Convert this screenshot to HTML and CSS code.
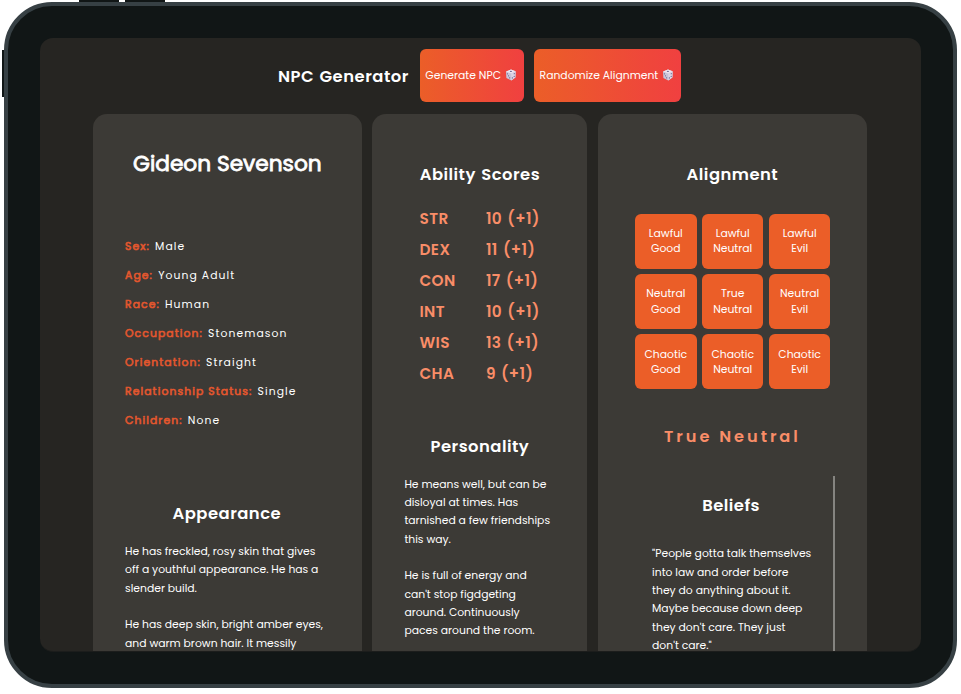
FILE: index.html
```html
<!DOCTYPE html>
<html lang="en">
<head>
<meta charset="utf-8">
<title>NPC Generator</title>
<link rel="stylesheet" href="styles.css">
</head>
<body>
<svg width="0" height="0" class="defs">
  <symbol id="die" viewBox="0 0 12 12">
    <path d="M6 .5 10.6 2.3 10.4 8.6 6.3 11.5 1.4 8.9 1 2.5Z" fill="#c9c4d7"/>
    <path d="M6 .5 10.6 2.3 6.2 4.5 1 2.5Z" fill="#efe6ef"/>
    <path d="M6.2 4.5 10.6 2.3 10.4 8.6 6.3 11.5Z" fill="#dcd3e3"/>
    <ellipse cx="5.9" cy="2.4" rx="1.1" ry=".6" fill="#75739c"/>
    <g fill="#65658f"><circle cx="2.4" cy="4.8" r=".65"/><circle cx="4.6" cy="8.8" r=".65"/><circle cx="3.5" cy="6.8" r=".6"/><circle cx="9.3" cy="4.7" r=".6"/><circle cx="7.4" cy="8.9" r=".65"/><circle cx="9.2" cy="7.4" r=".55"/></g>
  </symbol>
</svg>
<div class="tablet">
  <i class="key key-left"></i><i class="key key-top"></i><i class="key key-top second"></i>
  <div class="screen">
    <header class="toolbar">
      <h1>NPC Generator</h1>
      <button class="action generate"><span>Generate NPC</span><svg><use href="#die"/></svg></button>
      <button class="action randomize"><span>Randomize Alignment</span><svg><use href="#die"/></svg></button>
    </header>
    <main class="columns">
      <section class="card profile">
        <h2 class="name">Gideon Sevenson</h2>
        <ul class="facts">
          <li><b>Sex:</b> Male</li>
          <li><b>Age:</b> Young Adult</li>
          <li><b>Race:</b> Human</li>
          <li><b>Occupation:</b> Stonemason</li>
          <li><b>Orientation:</b> Straight</li>
          <li><b>Relationship Status:</b> Single</li>
          <li><b>Children:</b> None</li>
        </ul>
        <h3 class="appearance">Appearance</h3>
        <p>He has freckled, rosy skin that gives<br>off a youthful appearance. He has a<br>slender build.</p>
        <p>He has deep skin, bright amber eyes,<br>and warm brown hair. It messily</p>
      </section>
      <section class="card traits">
        <h3>Ability Scores</h3>
        <dl class="scores">
          <dt>STR</dt><dd>10 (+1)</dd>
          <dt>DEX</dt><dd>11 (+1)</dd>
          <dt>CON</dt><dd>17 (+1)</dd>
          <dt>INT</dt><dd>10 (+1)</dd>
          <dt>WIS</dt><dd>13 (+1)</dd>
          <dt>CHA</dt><dd>9 (+1)</dd>
        </dl>
        <h3 class="personality">Personality</h3>
        <p>He means well, but can be<br>disloyal at times. Has<br>tarnished a few friendships<br>this way.</p>
        <p>He is full of energy and<br>can't stop figdgeting<br>around. Continuously<br>paces around the room.</p>
      </section>
      <section class="card morals">
        <h3>Alignment</h3>
        <div class="grid">
          <button>Lawful<br>Good</button><button>Lawful<br>Neutral</button><button>Lawful<br>Evil</button>
          <button>Neutral<br>Good</button><button>True<br>Neutral</button><button>Neutral<br>Evil</button>
          <button>Chaotic<br>Good</button><button>Chaotic<br>Neutral</button><button>Chaotic<br>Evil</button>
        </div>
        <div class="result">True Neutral</div>
        <div class="beliefs">
          <h3>Beliefs</h3>
          <p>"People gotta talk themselves<br>into law and order before<br>they do anything about it.<br>Maybe because down deep<br>they don't care. They just<br>don't care."</p>
        </div>
      </section>
    </main>
  </div>
</div>
</body>
</html>
```

FILE: styles.css
```css
* { box-sizing: border-box; }
body { margin: 0; height: 694px; padding: 2px 4px 6px; background: #fff; overflow: hidden; color: #fff; font-family: Poppins, Inter, "Open Sans", sans-serif; }
h1, h2, h3, p, ul, dl, dd { margin: 0; padding: 0; }
h1, h2, h3, dt, dd { font-weight: 600; }
button { border: 0; padding: 0; color: #fff; font: inherit; }
.defs { position: absolute; }

.tablet { position: relative; height: 686px; padding: 32px 32px 32px; border: 4px solid #374044; border-radius: 48px; background: #111616; }
.key { position: absolute; background: #111616; }
.key-left { left: -6px; top: 44px; width: 2px; height: 47px; }
.key-top { left: 71px; top: -6px; width: 40px; height: 2px; }
.key-top.second { left: 117px; }
.screen { height: 614px; border-radius: 13px; border-bottom: 1px solid #1c1d1c; background: #262522; overflow: hidden; }

.toolbar { display: flex; height: 75.6px; padding: 10.6px 0 0 238px; }
.toolbar h1 { width: 142px; font-size: 16.4px; line-height: 55px; letter-spacing: .5px; word-spacing: 1px; white-space: nowrap; }
.action { display: flex; align-items: center; justify-content: space-between; height: 53.5px; padding: 0 6.5px 0 5.3px; border-radius: 6px; background: linear-gradient(90deg, #eb5e28, #f04040); font-size: 10.8px; white-space: nowrap; }
.action span { padding-top: 1px; }
.action svg { width: 12px; height: 12px; }
.generate { width: 104px; margin-right: 10.3px; padding-right: 7.3px; }
.randomize { width: 146.5px; }

.columns { display: flex; gap: 10.7px; height: 600px; padding-left: 53px; }
.card { flex: none; width: 268.7px; border-radius: 14px; background: #3c3a36; }
h3 { font-size: 16.4px; line-height: 26px; letter-spacing: .48px; word-spacing: 1px; text-align: center; }
p { margin-bottom: 18.35px; font-size: 10.8px; line-height: 18.35px; white-space: nowrap; }

.profile { padding: 32px 0 0 32px; }
.name { margin-right: 32px; font-size: 21.7px; font-weight: 400; line-height: 36px; -webkit-text-stroke: .8px #fff; text-align: center; }
.facts { margin-top: 50.4px; list-style: none; font-size: 10.8px; letter-spacing: 1.08px; }
.facts li { height: 29px; line-height: 29px; }
.facts b { margin-right: 1.2px; letter-spacing: 1.1px; color: #e4572e; font-weight: 400; -webkit-text-stroke: .6px #e4572e; }
.appearance { margin: 66.4px 33px 15.6px 0; }

.traits { width: 215px; padding: 48px 32px 0; }
.scores { display: grid; grid-template-columns: 66.5px 1fr; margin: 15px 0 0 15px; color: #f98d68; font-size: 15.3px; line-height: 31.1px; letter-spacing: .45px; word-spacing: 1px; white-space: nowrap; }
.personality { margin: 44.8px 0 15.6px; }

.morals { padding: 48px 0 0; }
.grid { display: grid; grid-template-columns: repeat(3, 61.5px); gap: 5.4px; margin: 26px 0 0 37px; }
.grid button { height: 55px; padding-top: .7px; border-radius: 6px; background: #eb5e28; font-size: 10.8px; line-height: 15.7px; }
.result { margin-top: 35px; color: #f98d68; font-size: 16.2px; font-weight: 600; line-height: 26px; letter-spacing: 2.95px; text-align: center; }
.beliefs { width: 183px; margin: 26px 0 0 54px; padding-top: 16.4px; border-right: 2px solid #858480; height: 180px; }
.beliefs h3 { margin: 0 23px 26.4px 0; }
```
